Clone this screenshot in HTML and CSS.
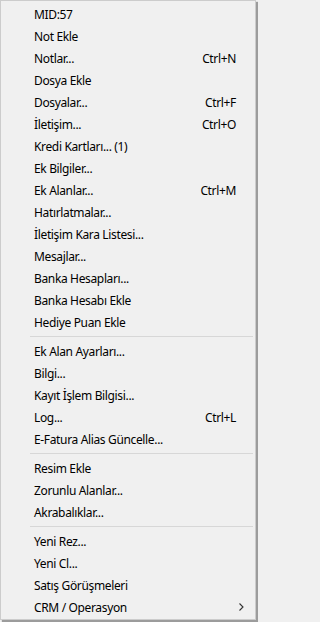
FILE: index.html
```html
<!DOCTYPE html>
<html lang="tr">
<head>
<meta charset="utf-8">
<title>Menü</title>
<link rel="stylesheet" href="styles.css">
</head>
<body>
<div class="menu">
  <div class="item"><span class="label">MID:57</span></div>
  <div class="item"><span class="label">Not Ekle</span></div>
  <div class="item"><span class="label">Notlar...</span><span class="key">Ctrl+N</span></div>
  <div class="item"><span class="label">Dosya Ekle</span></div>
  <div class="item"><span class="label">Dosyalar...</span><span class="key">Ctrl+F</span></div>
  <div class="item"><span class="label">İletişim...</span><span class="key">Ctrl+O</span></div>
  <div class="item"><span class="label">Kredi Kartları... (1)</span></div>
  <div class="item"><span class="label">Ek Bilgiler...</span></div>
  <div class="item"><span class="label">Ek Alanlar...</span><span class="key">Ctrl+M</span></div>
  <div class="item"><span class="label">Hatırlatmalar...</span></div>
  <div class="item"><span class="label">İletişim Kara Listesi...</span></div>
  <div class="item"><span class="label">Mesajlar...</span></div>
  <div class="item"><span class="label">Banka Hesapları...</span></div>
  <div class="item"><span class="label">Banka Hesabı Ekle</span></div>
  <div class="item"><span class="label">Hediye Puan Ekle</span></div>
  <div class="sep"></div>
  <div class="item"><span class="label">Ek Alan Ayarları...</span></div>
  <div class="item"><span class="label">Bilgi...</span></div>
  <div class="item"><span class="label">Kayıt İşlem Bilgisi...</span></div>
  <div class="item"><span class="label">Log...</span><span class="key">Ctrl+L</span></div>
  <div class="item"><span class="label">E-Fatura Alias Güncelle...</span></div>
  <div class="sep"></div>
  <div class="item"><span class="label">Resim Ekle</span></div>
  <div class="item"><span class="label">Zorunlu Alanlar...</span></div>
  <div class="item"><span class="label">Akrabalıklar...</span></div>
  <div class="sep"></div>
  <div class="item"><span class="label">Yeni Rez...</span></div>
  <div class="item"><span class="label">Yeni Cl...</span></div>
  <div class="item"><span class="label">Satış Görüşmeleri</span></div>
  <div class="item"><span class="label">CRM / Operasyon</span><span class="arrow"><svg width="5" height="8" viewBox="0 0 5 8"><path d="M0.5 0.5 L4 4 L0.5 7.5" fill="none" stroke="#333" stroke-width="1.1"/></svg></span></div>
</div>
</body>
</html>
```
FILE: styles.css
```css
html, body {
  margin: 0;
  padding: 0;
  background: #f0f0f0;
}
body {
  width: 258px;
  height: 622px;
  overflow: hidden;
  font-family: "Noto Sans", "Open Sans", sans-serif;
  font-size: 12px;
  letter-spacing: -0.35px;
  color: #000;
}
.menu {
  box-sizing: border-box;
  width: 256px;
  height: 620px;
  border: 1px solid #cccccc;
  background: #f0f0f0;
  padding: 2px 2px 0 2px;
  display: flex;
  flex-direction: column;
  box-shadow: 2px 2px 1px rgba(0, 0, 0, 0.35);
}
.item {
  height: 22px;
  display: flex;
  align-items: center;
  padding: 0 17px 0 31px;
  flex-shrink: 0;
}
.label {
  flex: 1;
  white-space: nowrap;
}
.key {
  white-space: nowrap;
}
.arrow {
  display: flex;
  align-items: center;
  margin-right: -8px;
}
.sep {
  height: 7px;
  flex-shrink: 0;
  display: flex;
  flex-direction: column;
  padding-top: 3px;
  box-sizing: border-box;
  margin-left: 27px;
}
.sep::after {
  content: "";
  display: block;
  height: 1px;
  background: #d7d7d7;
}
```
